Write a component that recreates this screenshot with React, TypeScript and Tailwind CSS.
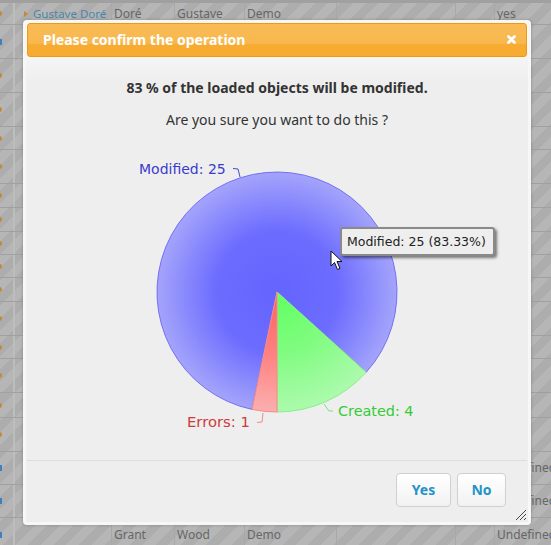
const columns = ["w-[15px] border-r-2 border-[#bdbdbd]", "w-[97px] border-r border-[#a8a8a8]", "w-[63px] border-r border-[#a8a8a8]", "w-[70px] border-r border-[#a8a8a8]", "w-[92px] border-r border-[#a8a8a8]", "w-[119px] border-r border-[#a8a8a8]", "w-[39px] border-r border-[#a8a8a8]", "flex-1"];

const rows = [
  { height: "h-[22px]", icon: "orange", cells: ["", "Gustave Doré", "Doré", "Gustave", "Demo", "", "", "yes"] },
  { height: "h-[34px]", icon: "blue", cells: [] },
  { height: "h-[34px]", icon: "orange", cells: [] },
  { height: "h-[34px]", icon: "orange", cells: [] },
  { height: "h-[23px]", icon: "orange", cells: [] },
  { height: "h-[34px]", icon: "orange", cells: [] },
  { height: "h-[24px]", icon: "orange", cells: [] },
  { height: "h-[24px]", icon: "orange", cells: [] },
  { height: "h-[23px]", icon: "orange", cells: [] },
  { height: "h-[23px]", icon: "orange", cells: [] },
  { height: "h-[24px]", icon: "orange", cells: [] },
  { height: "h-[34px]", icon: "orange", cells: [] },
  { height: "h-[23px]", icon: "orange", cells: [] },
  { height: "h-[34px]", icon: "orange", cells: [] },
  { height: "h-[25px]", icon: "orange", cells: [] },
  { height: "h-[34px]", icon: "orange", cells: [] },
  { height: "h-[33px]", icon: "blue", cells: ["", "", "", "", "", "", "", "Undefined"] },
  { height: "h-[33px]", icon: "blue", cells: ["", "", "", "", "", "", "", "Undefined"] },
  { height: "h-[34px]", icon: "blue", cells: ["", "", "Grant", "Wood", "Demo", "", "", "Undefined"] },
];

const PieChart = () => (
  <svg width="323" height="290" viewBox="-23 0 323 290" className="block">
    <defs>
      <radialGradient id="blueFill" gradientUnits="userSpaceOnUse" cx="124" cy="146" r="122">
        <stop offset="0.1" stopColor="#6666ff" />
        <stop offset="0.5" stopColor="#6c6cff" />
        <stop offset="1" stopColor="#a6a6fb" />
      </radialGradient>
      <radialGradient id="greenFill" gradientUnits="userSpaceOnUse" cx="124" cy="146" r="122">
        <stop offset="0.1" stopColor="#66ff66" />
        <stop offset="0.5" stopColor="#80fc80" />
        <stop offset="1" stopColor="#aefaae" />
      </radialGradient>
      <radialGradient id="redFill" gradientUnits="userSpaceOnUse" cx="124" cy="146" r="122">
        <stop offset="0.1" stopColor="#ff6666" />
        <stop offset="0.5" stopColor="#ff8080" />
        <stop offset="1" stopColor="#fbb0b0" />
      </radialGradient>
    </defs>
    <path d="M124 146 L213.2 226.3 A120 120 0 1 0 99 263.4 Z" fill="url(#blueFill)" stroke="#6f6ff5" strokeWidth="1" />
    <path d="M124 146 L124 266 A120 120 0 0 0 213.2 226.3 Z" fill="url(#greenFill)" stroke="#88f088" strokeWidth="1" />
    <path d="M124 146 L99 263.4 A120 120 0 0 0 124 266 Z" fill="url(#redFill)" stroke="#f78a8a" strokeWidth="1" />
    <path d="M80 22.500 L85 23 L87 31" fill="none" stroke="#4a4ac8" strokeWidth="1" />
    <path d="M110 267 L109 276 L104 276.500" fill="none" stroke="#f08a8a" strokeWidth="1" />
    <path d="M171 258 L176 265 L180 265" fill="none" stroke="#7fe07f" strokeWidth="1" />
    <text x="-14" y="28" fontFamily="'DejaVu Sans', sans-serif" fontSize="14" fill="#3b3bcc">Modified: 25</text>
    <text x="34" y="281" fontFamily="'DejaVu Sans', sans-serif" fontSize="14.800" fill="#cc3b3b">Errors: 1</text>
    <text x="185" y="270" fontFamily="'DejaVu Sans', sans-serif" fontSize="14.400" fill="#33cc33">Created: 4</text>
  </svg>
);

const Cursor = () => (
  <svg width="14" height="22" viewBox="0 0 14 22" className="absolute left-[330px] top-[250px]">
    <path d="M1 1 L1 16 L4.500 12.500 L7.500 19.500 L10 18.500 L7 11.500 L12 11.500 Z" fill="#fff" stroke="#111" strokeWidth="1" />
  </svg>
);

export default function App() {
  return (
    <div className="relative h-[545px] w-[551px] overflow-hidden bg-[repeating-linear-gradient(135deg,#b6b6b6_0px,#b6b6b6_9px,#adadad_9px,#adadad_18px)] font-['Noto_Sans',sans-serif] text-[12px] text-[#666]">
      <div className="flex h-[545px] flex-col border-t-[3px] border-[#a0a0a0]">
        {rows.map((row, r) => (
          <div key={r} className={`flex shrink-0 border-b border-[#a0a0a0] ${row.height}`}>
            {columns.map((col, c) => (
              <div key={c} className={`${col} flex shrink-0 items-center overflow-hidden pl-[2px] whitespace-nowrap`}>
                {c === 0 && row.icon === "orange" && <span className="ml-[-3px] h-[5px] w-[3px] rounded-r-full bg-[#c08a3a]" />}
                {c === 0 && row.icon === "blue" && <span className="ml-[-2px] h-[6px] w-[2px] bg-[#3f7fc4]" />}
                {r === 0 && c === 1 ? (
                  <span className="flex items-center gap-[5px] pl-[7px] text-[11.500px] text-[#4a86a8]">
                    <span className="h-0 w-0 border-y-[3px] border-l-[4px] border-y-transparent border-l-[#c08a3a]" />
                    {row.cells[c]}
                  </span>
                ) : (
                  row.cells[c]
                )}
              </div>
            ))}
          </div>
        ))}
      </div>

      <div className="absolute left-[23px] top-[20px] flex h-[505px] w-[508px] flex-col rounded-[4px] border-[3px] border-[#f7f7f7] bg-[linear-gradient(#ffffff_0px,#eeeeee_60px)] shadow-[0_0_3px_rgba(0,0,0,0.25)]">
        <div className="mx-px flex h-[34px] shrink-0 items-center justify-between rounded-[3px] border border-[#ee9a16] bg-[linear-gradient(#f9bb55_0%,#f8b84f_60%,#f7ab30_65%,#f7ab30_100%)] pb-[2px] pl-[15px] pr-[10px] text-[14px] font-bold text-white">
          <span>Please confirm the operation</span>
          <svg width="9" height="9" viewBox="0 0 9 9">
            <path d="M1.500 1.500 L7.500 7.500 M7.500 1.500 L1.500 7.500" stroke="#fff" strokeWidth="2.800" strokeLinecap="round" />
          </svg>
        </div>
        <p className="mt-[20px] text-center text-[14px] font-bold text-[#333]">83 % of the loaded objects will be modified.</p>
        <p className="mt-[11px] text-center text-[14px] text-[#333]">Are you sure you want to do this ?</p>
        <div className="ml-[104px] mt-[16px] min-h-0 flex-1">
          <PieChart />
        </div>
        <div className="mx-px flex h-[62px] shrink-0 items-start justify-end gap-[6px] border-t border-[#dddddd] pr-[21px] pt-[12px]">
          <button className="h-[34px] w-[55px] rounded-[4px] border border-[#d0d0d0] bg-[linear-gradient(#ffffff,#f2f2f2)] pb-[2px] text-[14px] font-bold text-[#2493c8]">Yes</button>
          <button className="h-[34px] w-[49px] rounded-[4px] border border-[#d0d0d0] bg-[linear-gradient(#ffffff,#f2f2f2)] pb-[2px] text-[14px] font-bold text-[#2493c8]">No</button>
        </div>
        <svg width="12" height="12" viewBox="0 0 12 12" className="absolute bottom-[1px] right-[1px]">
          <path d="M1 11 L11 1 M5 11 L11 5 M9 11 L11 9" stroke="#444" strokeWidth="1" />
        </svg>
      </div>

      <div className="absolute left-[340px] top-[227px] flex h-[29px] w-[155px] items-center rounded-[3px] border-2 border-[#8a8a8a] bg-[#eeeeee] pl-[5px] pt-[2px] font-['DejaVu_Sans',sans-serif] text-[12.500px] whitespace-nowrap text-[#222] shadow-[2px_2px_3px_rgba(0,0,0,0.5)]">
        Modified: 25 (83.33%)
      </div>
      <Cursor />
    </div>
  );
}
